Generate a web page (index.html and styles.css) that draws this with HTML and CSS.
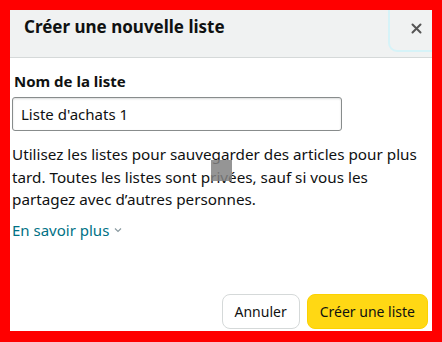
FILE: index.html
```html
<!DOCTYPE html>
<html lang="fr">
<head>
<meta charset="utf-8">
<link rel="stylesheet" href="styles.css">
</head>
<body>
<div class="modal">
  <div class="header">
    <h1 class="title">Créer une nouvelle liste</h1>
    <button class="close" aria-label="Fermer">
      <svg width="11" height="11" viewBox="0 0 11 11"><path d="M1.5 1.5 L9.5 9.5 M9.5 1.5 L1.5 9.5" stroke="#555" stroke-width="2" stroke-linecap="round"/></svg>
    </button>
  </div>
  <div class="body">
    <label class="label" for="name">Nom de la liste</label>
    <div class="input">Liste d'achats 1</div>
    <p class="desc">Utilisez les listes pour sauvegarder des articles pour plus tard. Toutes les listes sont privées, sauf si vous les partagez avec d’autres personnes.</p>
    <a class="more">En savoir plus <svg width="8" height="6" viewBox="0 0 8 6"><path d="M1 1.5 L4 4.5 L7 1.5" fill="none" stroke="#8a9aa0" stroke-width="1.2"/></svg></a>
    <div class="cursor"></div>
  </div>
  <div class="footer">
    <button class="btn cancel">Annuler</button>
    <button class="btn primary">Créer une liste</button>
  </div>
</div>
</body>
</html>
```
FILE: styles.css
```css
* { box-sizing: border-box; }
html, body { margin: 0; padding: 0; }
body {
  width: 442px;
  height: 342px;
  background: #ff0000;
  padding: 10px 10px 11px 10px;
  font-family: "Noto Sans", "Open Sans", sans-serif;
  color: #0f1111;
}
.modal {
  width: 422px;
  height: 321px;
  background: #fff;
  display: flex;
  flex-direction: column;
  overflow: hidden;
}
.header {
  height: 48px;
  background: #f0f2f2;
  border-bottom: 1px solid #d5d9d9;
  display: flex;
  justify-content: space-between;
  align-items: flex-start;
  padding-left: 14px;
  overflow: hidden;
  flex: none;
}
.title {
  margin: 5px 0 0 0;
  font-size: 17px;
  font-weight: 700;
  line-height: 24px;
  color: #0f1111;
}
.close {
  width: 52px;
  height: 50px;
  margin: -8px -8px 0 0;
  border: 2px solid #d6f3f8;
  border-radius: 9px;
  background: transparent;
  display: flex;
  align-items: center;
  justify-content: center;
  padding: 2px 0 0 4px;
  flex: none;
}
.body {
  position: relative;
  padding: 12px 2px 0 2px;
  flex: 1;
}
.label {
  display: block;
  font-size: 15px;
  font-weight: 700;
  line-height: 22px;
  margin-left: 2px;
}
.input {
  width: 330px;
  height: 34px;
  margin-top: 5px;
  border: 1px solid #888c8c;
  border-radius: 3px;
  font-size: 15px;
  line-height: 32px;
  padding-left: 8px;
  box-shadow: 0 1px 2px rgba(15,17,17,.15) inset;
}
.desc {
  margin: 12px 0 0 0;
  max-width: 405px;
  font-size: 15.25px;
  line-height: 22.5px;
}
.more {
  display: inline-flex;
  align-items: center;
  gap: 5px;
  margin-top: 8px;
  font-size: 15px;
  line-height: 22px;
  color: #007185;
}
.cursor {
  position: absolute;
  left: 201px;
  top: 102px;
  width: 21px;
  height: 21px;
  background: rgba(130,130,130,.85);
}
.footer {
  display: flex;
  justify-content: flex-end;
  gap: 7px;
  padding: 0 4px 2px 0;
  flex: none;
}
.btn {
  height: 35px;
  border-radius: 8px;
  font-family: inherit;
  font-size: 14px;
  color: #0f1111;
  padding: 0 12px;
}
.cancel {
  background: #fff;
  border: 1px solid #d5d9d9;
}
.primary {
  background: #ffd814;
  border: 1px solid #fcd200;
}
```
